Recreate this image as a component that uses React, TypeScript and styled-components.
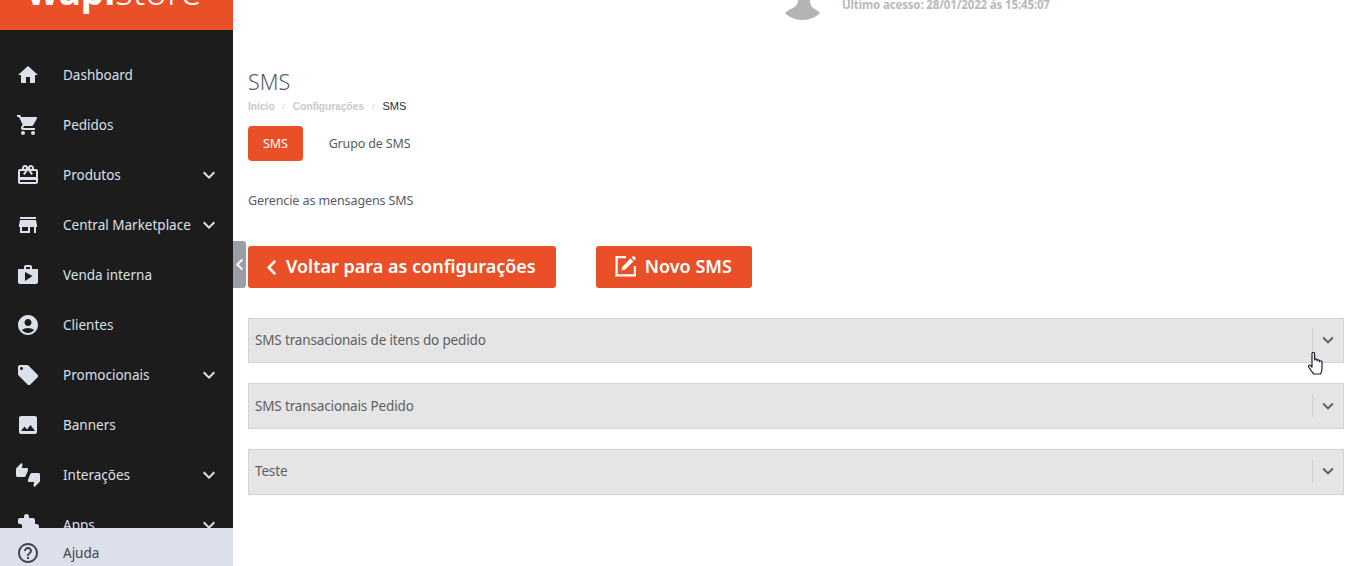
import React from "react"
import styled, { createGlobalStyle } from "styled-components"
import {
    MdHome, MdShoppingCart, MdRedeem, MdStore, MdShop, MdAccountCircle, MdLocalOffer,
    MdImage, MdThumbsUpDown, MdExtension, MdHelpOutline, MdKeyboardArrowDown,
} from "react-icons/md"
import { FaChevronLeft } from "react-icons/fa"

const ORANGE = "#ea5027"
const FONT = `"Noto Sans", "Open Sans", sans-serif`

const GlobalStyle = createGlobalStyle`
    html, body { margin: 0; padding: 0; background: #fff; }
    * { box-sizing: border-box; }
    body { font-family: ${FONT}; }
`

const Page = styled.div`
    width: 1356px;
    height: 566px;
    display: flex;
    overflow: hidden;
    position: relative;
`

const Sidebar = styled.aside`
    width: 233px;
    flex-shrink: 0;
    height: 100%;
    display: flex;
    flex-direction: column;
    background: #1c1c1c;
`

const LogoBar = styled.div`
    height: 30px;
    flex-shrink: 0;
    background: ${ORANGE};
    color: #fff;
    overflow: hidden;
    display: flex;
    align-items: flex-start;
    padding-left: 27px;
`

const LogoText = styled.div`
    margin-top: -19px;
    font-size: 37px;
    line-height: 20px;
    white-space: nowrap;
`

const LogoBold = styled.span`
    font-weight: 700;
`

const LogoLight = styled.span`
    font-weight: 300;
`

const Nav = styled.nav`
    flex: 1;
    min-height: 0;
    overflow: hidden;
    padding-top: 20px;
`

const NavItem = styled.div`
    height: 50px;
    display: flex;
    align-items: center;
    color: #dbe0ea;
    font-size: 13.5px;
    padding-left: 16px;
    letter-spacing: 0;
    svg { flex-shrink: 0; }
`

const NavLabel = styled.span`
    margin-left: 23px;
    flex: 1;
    white-space: nowrap;
`

const NavArrow = styled.span`
    width: 24px;
    height: 24px;
    margin-right: 12px;
    display: flex;
`

const HelpBar = styled.div`
    height: 38px;
    flex-shrink: 0;
    display: flex;
    align-items: center;
    background: #dbe0ea;
    color: #3f4550;
    font-size: 13.5px;
    padding: 12px 0 0 16px;
`

const Toggle = styled.div`
    position: absolute;
    left: 233px;
    top: 241px;
    width: 13px;
    height: 47px;
    background: #9a9ea5;
    border-radius: 0 3px 3px 0;
    color: #fff;
    display: flex;
    align-items: center;
    justify-content: center;
`

const Main = styled.main`
    flex: 1;
    min-width: 0;
    display: flex;
    flex-direction: column;
    padding: 0 12px 0 15px;
`

const TopBar = styled.div`
    height: 30px;
    display: flex;
    align-items: flex-start;
    padding-left: 535px;
    overflow: hidden;
    flex-shrink: 0;
`

const Avatar = styled.svg`
    width: 38px;
    height: 20px;
    flex-shrink: 0;
`

const LastAccess = styled.span`
    margin: -4px 0 0 21px;
    font-size: 11.5px;
    line-height: 18px;
    font-weight: 700;
    color: #b9b9b9;
    letter-spacing: -0.15px;
    white-space: nowrap;
`

const Title = styled.h1`
    margin: 38px 0 0;
    font-size: 21.5px;
    line-height: 28px;
    font-weight: 300;
    color: #555b66;
`

const Crumbs = styled.div`
    margin-top: 3px;
    height: 14px;
    display: flex;
    align-items: center;
    font-family: "Liberation Sans", Arial, sans-serif;
    font-size: 10.2px;
    font-weight: 700;
    color: #c9c9c9;
`

const CrumbSep = styled.span`
    margin: 0 8px;
    font-weight: 400;
    font-size: 8px;
`

const CrumbNow = styled.span`
    font-weight: 400;
    font-size: 11px;
    color: #2b2f38;
`

const Tabs = styled.div`
    margin-top: 13px;
    display: flex;
    align-items: center;
    gap: 26px;
`

const Tab = styled.div<{ $active?: boolean }>`
    height: 35px;
    display: flex;
    align-items: center;
    font-size: 12.5px;
    letter-spacing: -0.15px;
    border-radius: 4px;
    padding: ${(p) => (p.$active ? "0 15px" : "0")};
    background: ${(p) => (p.$active ? ORANGE : "transparent")};
    color: ${(p) => (p.$active ? "#fff" : "#555b66")};
`

const Description = styled.p`
    margin: 31px 0 0;
    font-size: 12.5px;
    line-height: 18px;
    letter-spacing: -0.1px;
    color: #555b66;
`

const Actions = styled.div`
    margin-top: 36px;
    display: flex;
    gap: 40px;
`

const ActionButton = styled.div`
    height: 42px;
    display: flex;
    align-items: center;
    gap: 8px;
    padding: 0 20px 2px 19px;
    background: ${ORANGE};
    border-radius: 3px;
    color: #fff;
    font-size: 18px;
    font-weight: 600;
    white-space: nowrap;
`

const BackChevron = styled(FaChevronLeft)`
    margin: 2px -2px 0 -4px;
`

const Accordions = styled.div`
    margin-top: 29.5px;
    display: flex;
    flex-direction: column;
    gap: 20px;
`

const AccordionRow = styled.div`
    height: 45.7px;
    display: flex;
    align-items: center;
    background: #e5e5e5;
    border: 1px solid #d3d3d3;
    padding: 0 0 1px 6px;
    color: #5f5f5f;
    font-size: 13.5px;
    letter-spacing: -0.15px;
`

const AccordionTitle = styled.span`
    flex: 1;
`

const AccordionToggle = styled.div`
    width: 31px;
    height: 23px;
    display: flex;
    align-items: center;
    justify-content: center;
    border-left: 1px solid #cfcfcf;
    color: #5a5f66;
`

const Cursor = styled.svg`
    position: absolute;
    left: 1307px;
    top: 351px;
    width: 19px;
    height: 25px;
`

const items = [
    { icon: MdHome, label: "Dashboard" },
    { icon: MdShoppingCart, label: "Pedidos" },
    { icon: MdRedeem, label: "Produtos", arrow: true },
    { icon: MdStore, label: "Central Marketplace", arrow: true },
    { icon: MdShop, label: "Venda interna" },
    { icon: MdAccountCircle, label: "Clientes" },
    { icon: MdLocalOffer, label: "Promocionais", arrow: true },
    { icon: MdImage, label: "Banners" },
    { icon: MdThumbsUpDown, label: "Interações", arrow: true },
    { icon: MdExtension, label: "Apps", arrow: true },
]

const rows = ["SMS transacionais de itens do pedido", "SMS transacionais Pedido", "Teste"]

const EditIcon = () => (
    <svg width="22" height="22" viewBox="0 0 22 22">
        <path fill="none" stroke="#fff" strokeWidth="2.2" d="M11 2.1H1.6v18.3h18.3V11" />
        <path fill="#fff" d="M6.5 15.5l.9-3.7 8.2-8.2 2.8 2.8-8.2 8.2zM16.6 2.6l1.2-1.2c.4-.4 1-.4 1.4 0l1.4 1.4c.4.4.4 1 0 1.4l-1.2 1.2z" />
    </svg>
)

const App = () => {
    return (
        <Page>
            <GlobalStyle />
            <Sidebar>
                <LogoBar>
                    <LogoText>
                        <LogoBold>wapi</LogoBold>
                        <LogoLight>store</LogoLight>
                    </LogoText>
                </LogoBar>
                <Nav>
                    {items.map((item) => (
                        <NavItem key={item.label}>
                            <item.icon size={24} />
                            <NavLabel>{item.label}</NavLabel>
                            {item.arrow && (
                                <NavArrow>
                                    <MdKeyboardArrowDown size={24} />
                                </NavArrow>
                            )}
                        </NavItem>
                    ))}
                </Nav>
                <HelpBar>
                    <MdHelpOutline size={24} />
                    <NavLabel>Ajuda</NavLabel>
                </HelpBar>
            </Sidebar>
            <Toggle>
                <FaChevronLeft size={13} />
            </Toggle>
            <Main>
                <TopBar>
                    <Avatar viewBox="0 0 38 20">
                        <path fill="#b4b4b4" d="M15 0h12c0 4 1 6 3 8 2 1 5 3 7 5-4 4-10 7-17.5 7S6 17 2 13c2-2 5-4 8-5 3-2 5-4 5-8z" />
                    </Avatar>
                    <LastAccess>Último acesso: 28/01/2022 às 15:45:07</LastAccess>
                </TopBar>
                <Title>SMS</Title>
                <Crumbs>
                    Início
                    <CrumbSep>/</CrumbSep>
                    Configurações
                    <CrumbSep>/</CrumbSep>
                    <CrumbNow>SMS</CrumbNow>
                </Crumbs>
                <Tabs>
                    <Tab $active>SMS</Tab>
                    <Tab>Grupo de SMS</Tab>
                </Tabs>
                <Description>Gerencie as mensagens SMS</Description>
                <Actions>
                    <ActionButton>
                        <BackChevron size={17} />
                        Voltar para as configurações
                    </ActionButton>
                    <ActionButton>
                        <EditIcon />
                        Novo SMS
                    </ActionButton>
                </Actions>
                <Accordions>
                    {rows.map((row) => (
                        <AccordionRow key={row}>
                            <AccordionTitle>{row}</AccordionTitle>
                            <AccordionToggle>
                                <MdKeyboardArrowDown size={22} />
                            </AccordionToggle>
                        </AccordionRow>
                    ))}
                </Accordions>
            </Main>
            <Cursor viewBox="0 0 19 25">
                <path
                    fill="#fff"
                    stroke="#1c2430"
                    strokeWidth="1.2"
                    strokeLinejoin="round"
                    d="M5 2.5c0-1.6 2.6-1.6 2.6 0v6.5c0-1.4 2.5-1.4 2.5 0v.8c0-1.3 2.4-1.3 2.4 0v.9c0-1.3 2.5-1.3 2.5 0v6.3c0 2.6-.6 4.4-1.4 6H6.8C5.1 21 3.1 18.6 1.7 16c-.7-1.4 1-2.6 2-1.4L5 16.2z"
                />
            </Cursor>
        </Page>
    )
}

export default App
